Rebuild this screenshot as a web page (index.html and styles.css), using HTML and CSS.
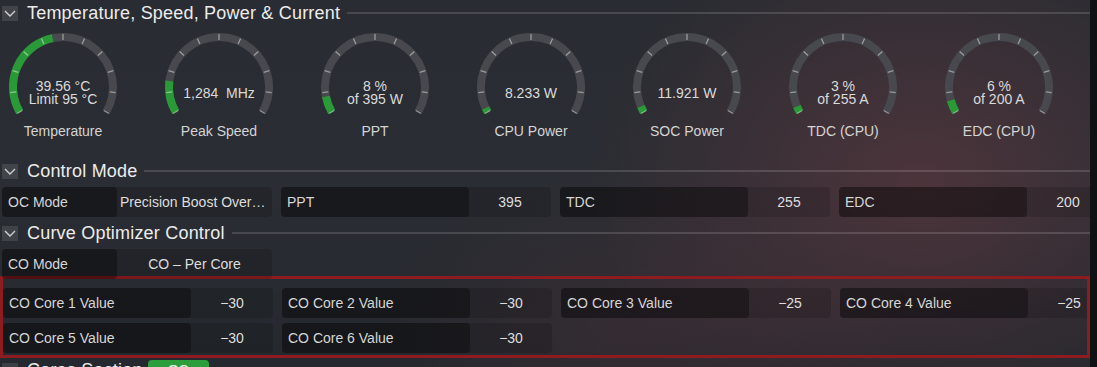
FILE: index.html
```html
<!DOCTYPE html>
<html lang="en">
<head>
    <meta charset="UTF-8">
    <title>Ryzen Master</title>
    <link rel="stylesheet" href="styles.css">
</head>
<body>

    <!-- shared gauge parts -->
    <svg class="svg-defs" aria-hidden="true">
        <defs>
            <path id="track" d="M16.7 82 A50 50 0 1 1 103.3 82" fill="none" stroke="#47494e" stroke-width="8"/>
            <path id="ticks" fill="none" stroke="rgba(255,255,255,0.45)" stroke-width="1.3"
                d="M19.3 80.5L14.1 83.5M13.26 61.91L7.29 62.54M15.3 42.48L9.59 40.62M25.07 25.55L20.62 21.54M40.89 14.07L38.44 8.58M60 10L60 4M79.11 14.07L81.56 8.58M94.93 25.55L99.38 21.54M104.7 42.48L110.41 40.62M106.74 61.91L112.71 62.54M100.7 80.5L105.9 83.5"/>
        </defs>
    </svg>

    <div class="window">
        <div class="panel">

            <div class="section-head">
                <span class="toggle"><svg width="16" height="15" viewBox="0 0 16 15"><polyline points="3,5 8,10 13,5" fill="none" stroke="#cfd0d3" stroke-width="1.4"/></svg></span>
                <span class="section-title">Temperature, Speed, Power &amp; Current</span>
                <span class="section-line"></span>
            </div>

            <div class="gauges">
                <div class="gauge">
                    <svg class="gauge-dial" width="120" height="93" viewBox="0 0 120 93">
                        <use href="#track"/>
                        <path class="gauge-fill" d="M16.7 82 A50 50 0 0 1 49.6 8.09"/>
                        <use href="#ticks"/>
                    </svg>
                    <div class="gauge-value">39.56 °C<br>Limit 95 °C</div>
                    <div class="gauge-label">Temperature</div>
                </div>
                <div class="gauge">
                    <svg class="gauge-dial" width="120" height="93" viewBox="0 0 120 93">
                        <use href="#track"/>
                        <path class="gauge-fill" d="M16.7 82 A50 50 0 0 1 10.37 50.91"/>
                        <use href="#ticks"/>
                    </svg>
                    <div class="gauge-value">1,284&nbsp;&nbsp;MHz</div>
                    <div class="gauge-label">Peak Speed</div>
                </div>
                <div class="gauge">
                    <svg class="gauge-dial" width="120" height="93" viewBox="0 0 120 93">
                        <use href="#track"/>
                        <path class="gauge-fill" d="M16.7 82 A50 50 0 0 1 10.92 66.54"/>
                        <use href="#ticks"/>
                    </svg>
                    <div class="gauge-value">8 %<br>of 395 W</div>
                    <div class="gauge-label">PPT</div>
                </div>
                <div class="gauge">
                    <svg class="gauge-dial" width="120" height="93" viewBox="0 0 120 93">
                        <use href="#track"/>
                        <path class="gauge-fill" d="M16.7 82 A50 50 0 0 1 14.68 78.13"/>
                        <use href="#ticks"/>
                    </svg>
                    <div class="gauge-value">8.233 W</div>
                    <div class="gauge-label">CPU Power</div>
                </div>
                <div class="gauge">
                    <svg class="gauge-dial" width="120" height="93" viewBox="0 0 120 93">
                        <use href="#track"/>
                        <path class="gauge-fill" d="M16.7 82 A50 50 0 0 1 13.97 76.54"/>
                        <use href="#ticks"/>
                    </svg>
                    <div class="gauge-value">11.921 W</div>
                    <div class="gauge-label">SOC Power</div>
                </div>
                <div class="gauge">
                    <svg class="gauge-dial" width="120" height="93" viewBox="0 0 120 93">
                        <use href="#track"/>
                        <path class="gauge-fill" d="M16.7 82 A50 50 0 0 1 13.97 76.54"/>
                        <use href="#ticks"/>
                    </svg>
                    <div class="gauge-value">3 %<br>of 255 A</div>
                    <div class="gauge-label">TDC (CPU)</div>
                </div>
                <div class="gauge">
                    <svg class="gauge-dial" width="120" height="93" viewBox="0 0 120 93">
                        <use href="#track"/>
                        <path class="gauge-fill" d="M16.7 82 A50 50 0 0 1 11.84 70.45"/>
                        <use href="#ticks"/>
                    </svg>
                    <div class="gauge-value">6 %<br>of 200 A</div>
                    <div class="gauge-label">EDC (CPU)</div>
                </div>
            </div>

            <div class="section-head">
                <span class="toggle"><svg width="16" height="15" viewBox="0 0 16 15"><polyline points="3,5 8,10 13,5" fill="none" stroke="#cfd0d3" stroke-width="1.4"/></svg></span>
                <span class="section-title">Control Mode</span>
                <span class="section-line"></span>
            </div>

            <div class="field-grid">
                <div class="field field-mode">
                    <span class="field-label">OC Mode</span>
                    <span class="field-value value-left">Precision Boost Overdrive</span>
                </div>
                <div class="field">
                    <span class="field-label">PPT</span>
                    <span class="field-value">395</span>
                </div>
                <div class="field">
                    <span class="field-label">TDC</span>
                    <span class="field-value">255</span>
                </div>
                <div class="field">
                    <span class="field-label">EDC</span>
                    <span class="field-value">200</span>
                </div>
            </div>

            <div class="section-head">
                <span class="toggle"><svg width="16" height="15" viewBox="0 0 16 15"><polyline points="3,5 8,10 13,5" fill="none" stroke="#cfd0d3" stroke-width="1.4"/></svg></span>
                <span class="section-title">Curve Optimizer Control</span>
                <span class="section-line"></span>
            </div>

            <div class="field-grid">
                <div class="field field-mode">
                    <span class="field-label">CO Mode</span>
                    <span class="field-value">CO – Per Core</span>
                </div>
            </div>

            <div class="highlight">
                <div class="field-grid">
                    <div class="field">
                        <span class="field-label">CO Core 1 Value</span>
                        <span class="field-value">−30</span>
                    </div>
                    <div class="field">
                        <span class="field-label">CO Core 2 Value</span>
                        <span class="field-value">−30</span>
                    </div>
                    <div class="field">
                        <span class="field-label">CO Core 3 Value</span>
                        <span class="field-value">−25</span>
                    </div>
                    <div class="field">
                        <span class="field-label">CO Core 4 Value</span>
                        <span class="field-value">−25</span>
                    </div>
                    <div class="field">
                        <span class="field-label">CO Core 5 Value</span>
                        <span class="field-value">−30</span>
                    </div>
                    <div class="field">
                        <span class="field-label">CO Core 6 Value</span>
                        <span class="field-value">−30</span>
                    </div>
                </div>
            </div>

            <div class="section-head">
                <span class="toggle"><svg width="16" height="15" viewBox="0 0 16 15"><polyline points="3,5 8,10 13,5" fill="none" stroke="#cfd0d3" stroke-width="1.4"/></svg></span>
                <span class="section-title">Cores Section</span>
                <span class="badge">OC</span>
                <span class="section-line"></span>
            </div>

        </div>
        <div class="scrollbar"></div>
    </div>

</body>
</html>
```

FILE: styles.css
```css
body {
    margin: 0;
    background: #101113;
    font-family: "Liberation Sans", Arial, sans-serif;
    overflow: hidden;
}

.svg-defs {
    position: absolute;
    width: 0;
    height: 0;
}

.window {
    display: flex;
    height: 367px;
    overflow: hidden;
}

.panel {
    width: 1090px;
    flex: none;
    box-sizing: border-box;
    padding: 1px 0 0 2px;
    overflow: hidden;
    color: #d6d6d6;
    background:
        radial-gradient(ellipse 330px 260px at 920px 180px, rgba(105, 58, 66, 0.55), rgba(105, 58, 66, 0) 100%),
        radial-gradient(ellipse 260px 160px at 640px 330px, rgba(90, 52, 60, 0.3), rgba(90, 52, 60, 0) 100%),
        linear-gradient(180deg, #292c32 0%, #2a2d33 50%, #25282e 100%);
}

.scrollbar {
    flex: 1;
    background: #101113;
}

/* section headers */
.section-head {
    display: flex;
    align-items: center;
    height: 24px;
}

.toggle {
    width: 16px;
    height: 15px;
    flex: none;
    display: flex;
    background: rgba(255, 255, 255, 0.11);
}

.section-title {
    margin-left: 9px;
    font-size: 18px;
    letter-spacing: 0.2px;
    color: #ececec;
    white-space: nowrap;
}

.section-line {
    flex: 1;
    height: 2px;
    margin-left: 7px;
    background: rgba(255, 255, 255, 0.14);
}

.badge {
    width: 61px;
    height: 20px;
    margin-left: 5px;
    border-radius: 4px;
    background: #2c9e3b;
    color: #fff;
    font-size: 14px;
    line-height: 20px;
    text-align: center;
}

/* gauges */
.gauges {
    display: flex;
    gap: 36px;
    padding-left: 1px;
    margin: 5px 0 20px;
}

.gauge {
    position: relative;
    width: 120px;
    flex: none;
}

.gauge-dial {
    display: block;
}

.gauge-fill {
    fill: none;
    stroke: #2a9a38;
    stroke-width: 8;
}

.gauge-value {
    position: absolute;
    left: 0;
    right: 0;
    top: 63px;
    transform: translateY(-50%);
    text-align: center;
    font-size: 14px;
    line-height: 13px;
    color: #dadada;
    white-space: nowrap;
}

.gauge-label {
    text-align: center;
    font-size: 14px;
    line-height: 16px;
    color: #d4d4d4;
}

/* fields */
.field-grid {
    display: grid;
    grid-template-columns: repeat(4, 270px);
    column-gap: 9px;
    row-gap: 5px;
    margin: 4px 0;
}

.field {
    display: flex;
    height: 30px;
    border-radius: 4px;
    background: rgba(0, 0, 0, 0.14);
    font-size: 14px;
    line-height: 30px;
}

.field-label {
    width: 188px;
    flex: none;
    box-sizing: border-box;
    padding-left: 6px;
    border-radius: 4px;
    background: rgba(0, 0, 0, 0.32);
    color: #d6d6d6;
    white-space: nowrap;
}

.field-mode .field-label {
    width: 115px;
}

.field-value {
    flex: 1;
    min-width: 0;
    text-align: center;
    color: #dedede;
    white-space: nowrap;
    overflow: hidden;
    text-overflow: ellipsis;
}

.value-left {
    text-align: left;
    padding: 0 2px 0 3px;
}

/* red marker round the core values */
.highlight {
    margin: -7px 0 0 -2px;
    padding: 9px 0 2px;
    border: 3px solid #8d1b20;
    overflow: hidden;
}

.highlight .field-grid {
    margin: 0;
}
```
